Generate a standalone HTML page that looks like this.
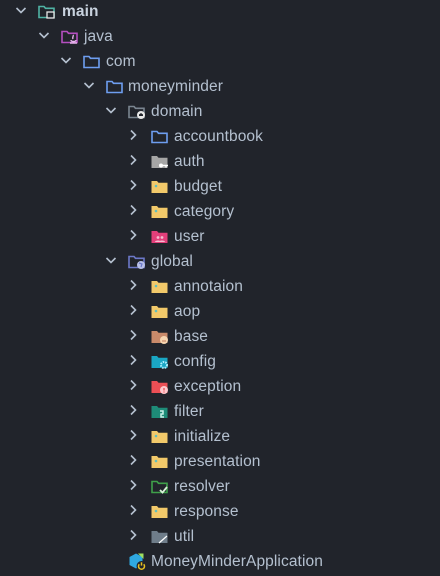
<!DOCTYPE html>
<html><head><meta charset="utf-8"><style>
body{margin:0;width:440px;height:576px;background:#21242b;overflow:hidden;font-family:"Liberation Sans",sans-serif;}
.r{position:absolute;height:25px;line-height:24px;font-size:15.5px;letter-spacing:0.1px;color:#b4c0cf;white-space:nowrap;}
.r svg{position:absolute;top:4px}
.ch{position:absolute;top:6px}
.t{position:absolute;top:0}
</style></head><body>
<svg width="0" height="0" style="position:absolute">
<defs>
<path id="fo" d="M1 2.5h5l1.5 1.8H16V13.5H1z" fill="none" stroke-width="1.6"/>
<path id="ff" d="M0.5 2h5.5l1.5 1.8H16.5V14H0.5z"/>
<path id="cd" d="M2.5 4l4.5 4.5 4.5-4.5" fill="none" stroke="#b4c0cf" stroke-width="1.6"/>
<path id="cr" d="M4 1.5l4.5 4.5-4.5 4.5" fill="none" stroke="#b4c0cf" stroke-width="1.6"/>
</defs></svg>

<div class="r" style="top:0;left:0;width:440px">
<svg class="ch" style="left:14px" width="14" height="12"><use href="#cd"/></svg>
<svg style="left:38px" width="18" height="16"><use href="#fo" stroke="#4fb3a4"/><rect x="9" y="8" width="7" height="6" fill="#21242b" stroke="#e8e8e8" stroke-width="1.3"/></svg>
<span class="t" style="left:62px;font-weight:bold;color:#c8d2de">main</span></div>
<div class="r" style="top:25px;left:0">
<svg class="ch" style="left:37px" width="14" height="12"><use href="#cd"/></svg>
<svg style="left:61px" width="18" height="16"><use href="#fo" stroke="#b44fc0"/><path d="M9 14h7M10 11c0 2 5 2 5 0M12 6c1 1-1 2 0 4" stroke="#e8b5ee" stroke-width="1.4" fill="none"/></svg>
<span class="t" style="left:84px">java</span></div>
<div class="r" style="top:50px;left:0">
<svg class="ch" style="left:59px" width="14" height="12"><use href="#cd"/></svg>
<svg style="left:83px" width="18" height="16"><use href="#fo" stroke="#6e9ef0"/></svg>
<span class="t" style="left:106px">com</span></div>
<div class="r" style="top:75px;left:0">
<svg class="ch" style="left:82px" width="14" height="12"><use href="#cd"/></svg>
<svg style="left:106px" width="18" height="16"><use href="#fo" stroke="#6e9ef0"/></svg>
<span class="t" style="left:128px">moneyminder</span></div>
<div class="r" style="top:100px;left:0">
<svg class="ch" style="left:104px" width="14" height="12"><use href="#cd"/></svg>
<svg style="left:128px" width="18" height="16"><use href="#fo" stroke="#7a8590"/><circle cx="13" cy="11" r="4" fill="#e8e8e8"/><path d="M11 12v-1.5l2-1.5 2 1.5V12" fill="#21242b"/></svg>
<span class="t" style="left:151px">domain</span></div>

<div class="r" style="top:125px;left:0"><svg class="ch" style="left:127px" width="14" height="12"><use href="#cr"/></svg>
<svg style="left:151px" width="18" height="16"><use href="#fo" stroke="#6e9ef0"/></svg><span class="t" style="left:174px">accountbook</span></div>
<div class="r" style="top:150px;left:0"><svg class="ch" style="left:127px" width="14" height="12"><use href="#cr"/></svg>
<svg style="left:151px" width="18" height="16"><use href="#ff" fill="#a6a6a6"/><circle cx="10" cy="11.5" r="2" fill="#fff"/><path d="M11 11.5h6M15 11.5v2" stroke="#fff" stroke-width="1.4"/></svg><span class="t" style="left:174px">auth</span></div>
<div class="r" style="top:175px;left:0"><svg class="ch" style="left:127px" width="14" height="12"><use href="#cr"/></svg>
<svg style="left:151px" width="18" height="16"><use href="#ff" fill="#f2c96a"/><circle cx="5" cy="7" r="1.3" fill="#5fbfbf"/></svg><span class="t" style="left:174px">budget</span></div>
<div class="r" style="top:200px;left:0"><svg class="ch" style="left:127px" width="14" height="12"><use href="#cr"/></svg>
<svg style="left:151px" width="18" height="16"><use href="#ff" fill="#f2c96a"/><circle cx="5" cy="7" r="1.3" fill="#5fbfbf"/></svg><span class="t" style="left:174px">category</span></div>
<div class="r" style="top:225px;left:0"><svg class="ch" style="left:127px" width="14" height="12"><use href="#cr"/></svg>
<svg style="left:151px" width="18" height="16"><use href="#ff" fill="#e23f7a"/><circle cx="7" cy="8.5" r="1.4" fill="#f5bcd0"/><circle cx="11" cy="8.5" r="1.4" fill="#f5bcd0"/><path d="M4 13c0-2 6-2 6 0M8 13c0-2 6-2 6 0" fill="#f5bcd0"/></svg><span class="t" style="left:174px">user</span></div>

<div class="r" style="top:250px;left:0">
<svg class="ch" style="left:104px" width="14" height="12"><use href="#cd"/></svg>
<svg style="left:128px" width="18" height="16"><use href="#fo" stroke="#6c78c8"/><circle cx="13" cy="11" r="4" fill="#b8c0e8"/><path d="M11 9l3 1-1 3" stroke="#6c78c8" stroke-width="1.2" fill="none"/></svg>
<span class="t" style="left:151px">global</span></div>

<div class="r" style="top:275px;left:0"><svg class="ch" style="left:127px" width="14" height="12"><use href="#cr"/></svg>
<svg style="left:151px" width="18" height="16"><use href="#ff" fill="#f2c96a"/><circle cx="5" cy="7" r="1.3" fill="#5fbfbf"/></svg><span class="t" style="left:174px">annotaion</span></div>
<div class="r" style="top:300px;left:0"><svg class="ch" style="left:127px" width="14" height="12"><use href="#cr"/></svg>
<svg style="left:151px" width="18" height="16"><use href="#ff" fill="#f2c96a"/><circle cx="5" cy="7" r="1.3" fill="#5fbfbf"/></svg><span class="t" style="left:174px">aop</span></div>
<div class="r" style="top:325px;left:0"><svg class="ch" style="left:127px" width="14" height="12"><use href="#cr"/></svg>
<svg style="left:151px" width="18" height="16"><use href="#ff" fill="#c98a6a"/><circle cx="13" cy="11" r="4" fill="#f7d6b0"/><path d="M11 12h4" stroke="#c98a6a" stroke-width="1.2"/></svg><span class="t" style="left:174px">base</span></div>
<div class="r" style="top:350px;left:0"><svg class="ch" style="left:127px" width="14" height="12"><use href="#cr"/></svg>
<svg style="left:151px" width="18" height="16"><use href="#ff" fill="#1aa7c4"/><circle cx="13" cy="11" r="3" fill="none" stroke="#aef0ff" stroke-width="2" stroke-dasharray="1.5 1"/></svg><span class="t" style="left:174px">config</span></div>
<div class="r" style="top:375px;left:0"><svg class="ch" style="left:127px" width="14" height="12"><use href="#cr"/></svg>
<svg style="left:151px" width="18" height="16"><use href="#ff" fill="#ec4f55"/><circle cx="13" cy="11" r="4" fill="#ffc8cc"/><path d="M13 9v2.5M13 12.5v1" stroke="#ec4f55" stroke-width="1.3"/></svg><span class="t" style="left:174px">exception</span></div>
<div class="r" style="top:400px;left:0"><svg class="ch" style="left:127px" width="14" height="12"><use href="#cr"/></svg>
<svg style="left:151px" width="18" height="16"><use href="#ff" fill="#1e8c78"/><path d="M9 7h3v3h-2v3h3" stroke="#c8f0e8" stroke-width="1.5" fill="none"/></svg><span class="t" style="left:174px">filter</span></div>
<div class="r" style="top:425px;left:0"><svg class="ch" style="left:127px" width="14" height="12"><use href="#cr"/></svg>
<svg style="left:151px" width="18" height="16"><use href="#ff" fill="#f2c96a"/><circle cx="5" cy="7" r="1.3" fill="#5fbfbf"/></svg><span class="t" style="left:174px">initialize</span></div>
<div class="r" style="top:450px;left:0"><svg class="ch" style="left:127px" width="14" height="12"><use href="#cr"/></svg>
<svg style="left:151px" width="18" height="16"><use href="#ff" fill="#f2c96a"/><circle cx="5" cy="7" r="1.3" fill="#5fbfbf"/></svg><span class="t" style="left:174px">presentation</span></div>
<div class="r" style="top:475px;left:0"><svg class="ch" style="left:127px" width="14" height="12"><use href="#cr"/></svg>
<svg style="left:151px" width="18" height="16"><use href="#fo" stroke="#3fa04a"/><path d="M9 11l2.5 2.5L16 8" stroke="#d8f0d8" stroke-width="1.8" fill="none"/></svg><span class="t" style="left:174px">resolver</span></div>
<div class="r" style="top:500px;left:0"><svg class="ch" style="left:127px" width="14" height="12"><use href="#cr"/></svg>
<svg style="left:151px" width="18" height="16"><use href="#ff" fill="#f2c96a"/><circle cx="5" cy="7" r="1.3" fill="#5fbfbf"/></svg><span class="t" style="left:174px">response</span></div>
<div class="r" style="top:525px;left:0"><svg class="ch" style="left:127px" width="14" height="12"><use href="#cr"/></svg>
<svg style="left:151px" width="18" height="16"><use href="#ff" fill="#6f7d8a"/><path d="M8 14l8-7" stroke="#fff" stroke-width="1.2"/></svg><span class="t" style="left:174px">util</span></div>

<div class="r" style="top:550px;left:0">
<svg style="left:128px;top:2px" width="20" height="20"><path d="M1.5 5l6.5-3.5 6.5 3.5v8l-6.5 3.5-6.5-3.5z" fill="#2fa8e0"/><path d="M10 1.5h5.5v5.5z" fill="#a0e060"/><circle cx="13.5" cy="14" r="5" fill="#21242b"/><path d="M11.3 12.2a3 3 0 1 0 4.4 0" stroke="#e8c020" stroke-width="1.5" fill="none"/><path d="M13.5 10.3v3.3" stroke="#e8c020" stroke-width="1.5"/></svg>
<span class="t" style="left:151px">MoneyMinderApplication</span></div>
</body></html>
